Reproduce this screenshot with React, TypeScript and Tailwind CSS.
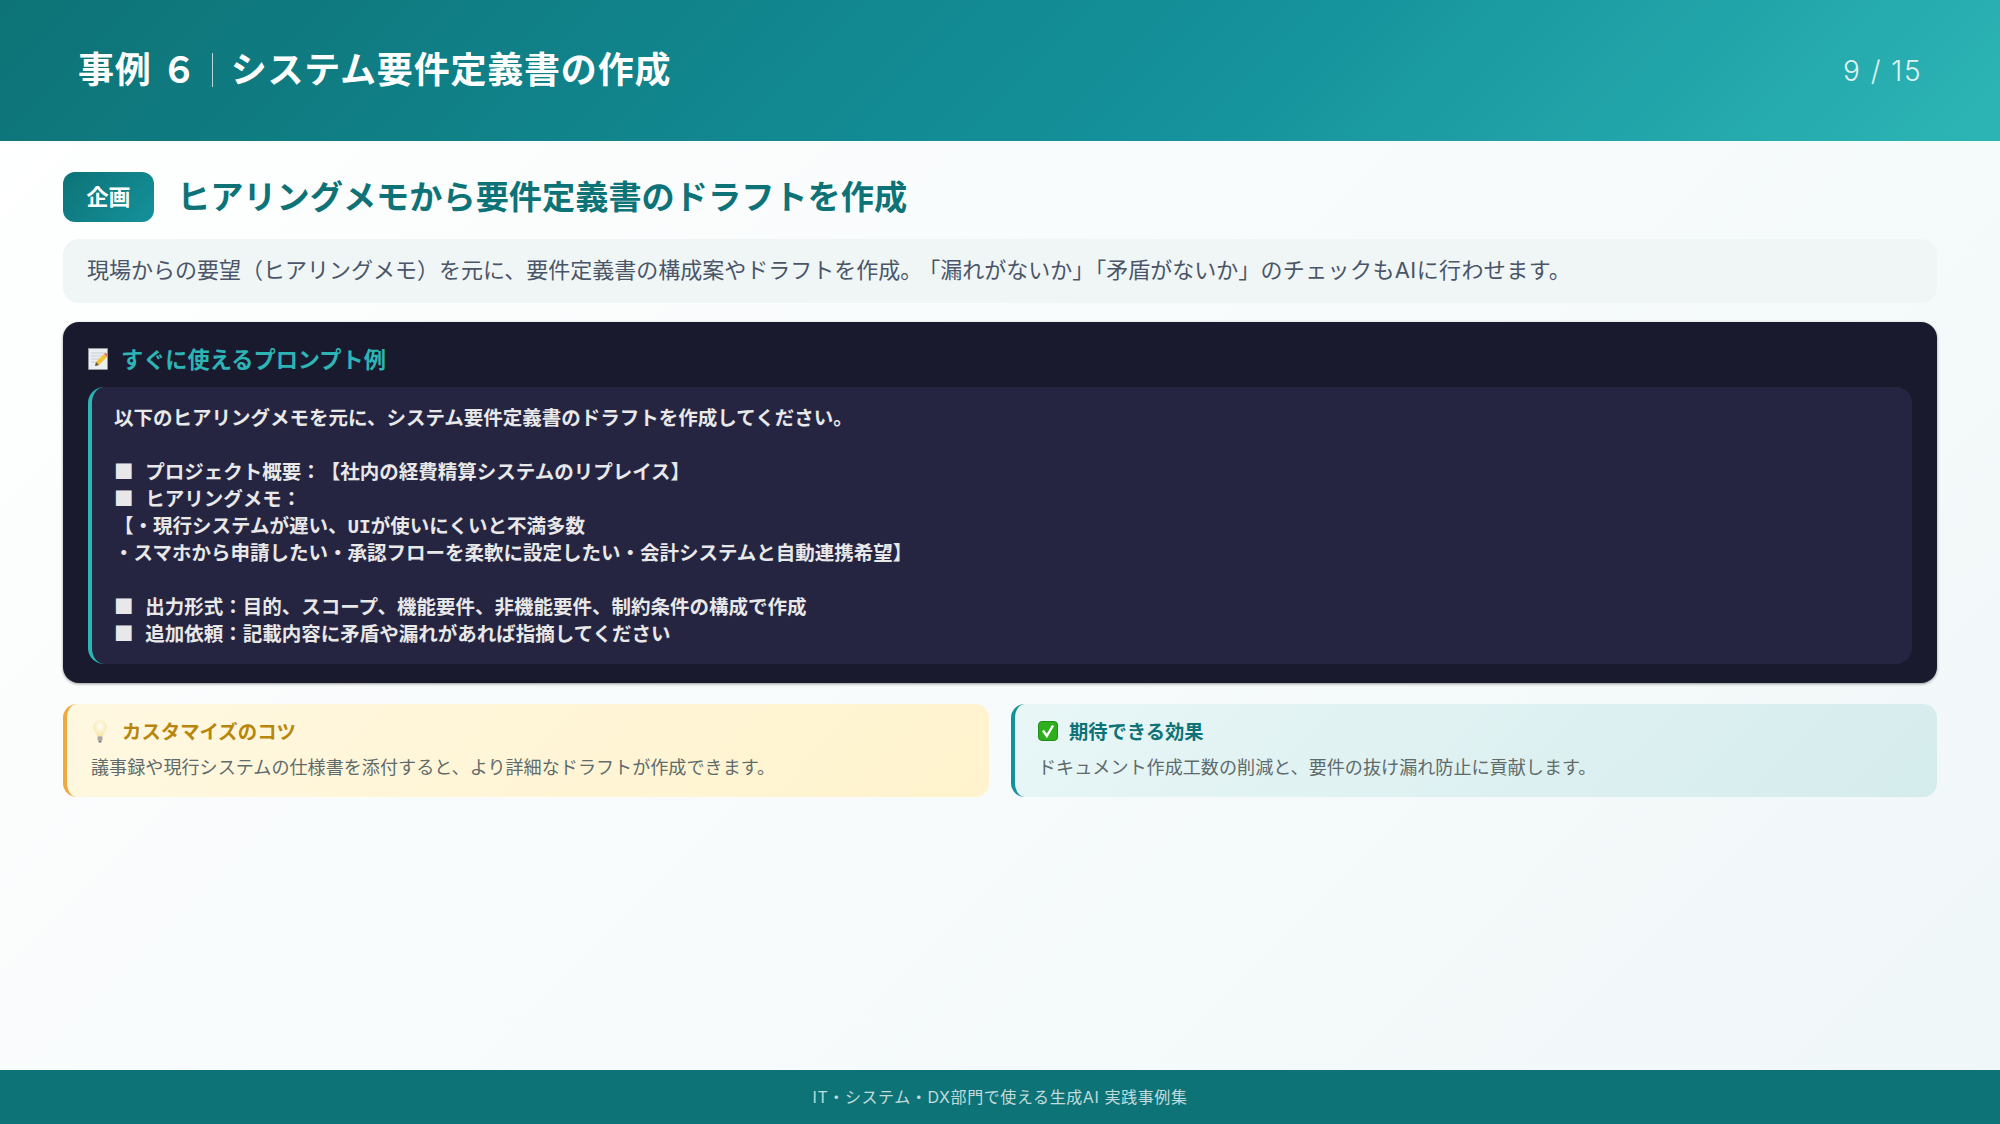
import React from 'react';

const jp = 'font-["Inter","Noto_Sans_CJK_JP",sans-serif]';

function MemoIcon() {
  return (
    <svg width="20" height="22" viewBox="0 0 20 22" className="shrink-0 -translate-y-[1px]">
      <rect x="0.5" y="0.5" width="19" height="21" fill="#eceff1" stroke="#9aa0a8" strokeWidth="0.6" />
      <path d="M3 5h14M3 8h14M3 11h10M3 14h7" stroke="#c2c7cf" strokeWidth="0.8" />
      <path d="M7 18l1-4 8-8 3 3-8 8z" fill="#f2c230" />
      <path d="M16 6l1.6-1.6 2.4 2.4L19 9z" fill="#e0707c" />
      <path d="M7 18l1-4 3 3z" fill="#5f5648" />
    </svg>
  );
}

function BulbIcon() {
  return (
    <svg width="16" height="24" viewBox="0 0 14 21" className="shrink-0 -translate-y-[2px]">
      <defs>
        <radialGradient id="bulb" cx="0.5" cy="0.38" r="0.6">
          <stop offset="0" stopColor="#fffef8" />
          <stop offset="1" stopColor="#f9e6a6" />
        </radialGradient>
      </defs>
      <path d="M7 1a6 6 0 0 0-6 6c0 3 2.500 4.500 3.500 8h5c1-3.500 3.500-5 3.500-8a6 6 0 0 0-6-6z" fill="url(#bulb)" />
      <rect x="4.800" y="15" width="4.400" height="4" rx="1" fill="#a9a9a2" />
      <rect x="5.800" y="19" width="2.400" height="1.600" fill="#77766f" />
    </svg>
  );
}

function CheckIcon() {
  return (
    <svg width="20" height="20" viewBox="0 0 20 20" className="shrink-0 -translate-y-[1px]">
      <rect x="0.500" y="0.500" width="19" height="19" rx="3.500" fill="#2fae1e" stroke="#1f8f14" />
      <path d="M5 9.500l3.800 5.500L15 4.500" fill="none" stroke="#ffffff" strokeWidth="2.400" />
    </svg>
  );
}

function Sq() {
  return <span className='font-["Noto_Sans_CJK_JP",sans-serif] leading-none'>■</span>;
}

export default function App() {
  return (
    <div className={`flex h-[1124px] w-[2000px] flex-col overflow-hidden bg-[linear-gradient(135deg,#ffffff_0%,#f0f7f8_100%)] ${jp}`}>
      <header className="flex h-[141px] shrink-0 items-center justify-between bg-[linear-gradient(135deg,#0d7377_0%,#14919b_60%,#2db5b5_100%)] pl-[78px] pr-[78px]">
        <h1 className="mb-[1px] flex items-center text-[36px] font-bold leading-[44px] tracking-[0.8px] text-white">
          <span>事例 ６</span>
          <span className="ml-[14px] mr-[18px] h-[34px] w-px bg-white/70" />
          <span>システム要件定義書の作成</span>
        </h1>
        <div className="text-[28px] font-light tracking-[1.500px] text-white/85">9 / 15</div>
      </header>

      <main className="flex flex-1 flex-col px-[63px] pt-[31px]">
        <div className="flex items-center gap-[23px]">
          <span className="flex h-[50px] w-[91px] items-center justify-center rounded-[12px] bg-[linear-gradient(135deg,#0d7377,#14919b)] text-[22px] font-bold text-white">企画</span>
          <h2 className="translate-y-[1px] text-[33.200px] font-bold text-[#0d7377]">ヒアリングメモから要件定義書のドラフトを作成</h2>
        </div>

        <p className="mt-[17px] flex h-[64px] items-center rounded-[16px] bg-[#f0f6f6] px-[24px] pb-[2px] text-[22px] text-[#4a5568]">
          <span>
            現場からの要望（ヒアリングメモ）を元に、要件定義書の構成案やドラフトを作成。
            <span className="ml-[7px]">「漏れがないか」</span>
            <span className="ml-[1px]">「矛盾がないか」</span>
            <span className="tracking-[0.4px]">のチェックもAIに行わせます。</span>
          </span>
        </p>

        <section className="mt-[19px] flex h-[361px] flex-col rounded-[16px] bg-[#1a1a2e] px-[25px] pt-[16px] shadow-[0_1px_3px_rgba(0,0,0,0.4)]">
          <div className="flex h-[44px] items-center gap-[13px]">
            <MemoIcon />
            <h3 className="text-[22.200px] font-bold text-[#2db5b5]">すぐに使えるプロンプト例</h3>
          </div>
          <pre className='mt-[5px] h-[277px] rounded-[16px] border-l-4 border-[#2db5b5] bg-[#252542] px-[22px] py-[20px] font-["Liberation_Mono","Noto_Sans_CJK_JP",monospace] text-[19.500px] font-bold leading-[27px] whitespace-pre-wrap text-[#e8e8e8] [text-spacing-trim:space-all]'>
            以下のヒアリングメモを元に、システム要件定義書のドラフトを作成してください。{'\n\n'}
            <Sq /> プロジェクト概要：【社内の経費精算システムのリプレイス】{'\n'}
            <Sq /> ヒアリングメモ：{'\n'}
            【・現行システムが遅い、UIが使いにくいと不満多数{'\n'}
            ・スマホから申請したい・承認フローを柔軟に設定したい・会計システムと自動連携希望】{'\n\n'}
            <Sq /> 出力形式：目的、スコープ、機能要件、非機能要件、制約条件の構成で作成{'\n'}
            <Sq /> 追加依頼：記載内容に矛盾や漏れがあれば指摘してください
          </pre>
        </section>

        <div className="mt-[21px] grid grid-cols-2 gap-[22px]">
          <div className="h-[93px] rounded-[14px] border-l-4 border-[#f0a840] bg-[linear-gradient(135deg,#fff8e1,#fff3cd)] pl-[24px] pr-[20px] pt-[13px]">
            <div className="flex h-[30px] translate-y-[1px] items-center gap-[14px] pl-[1px]">
              <BulbIcon />
              <h4 className="text-[19.400px] font-bold text-[#b8860b]">カスタマイズのコツ</h4>
            </div>
            <p className="mt-[7px] text-[18.100px] leading-[27px] text-[#5f6b6b]">議事録や現行システムの仕様書を添付すると、より詳細なドラフトが作成できます。</p>
          </div>
          <div className="h-[93px] rounded-[14px] border-l-4 border-[#14919b] bg-[linear-gradient(135deg,#e8f6f6,#d5eced)] pl-[23px] pr-[20px] pt-[13px]">
            <div className="flex h-[30px] items-center gap-[11px]">
              <CheckIcon />
              <h4 className="text-[19.300px] font-bold text-[#0d7377]">期待できる効果</h4>
            </div>
            <p className="mt-[7px] text-[18.100px] leading-[27px] text-[#5f6b6b]">ドキュメント作成工数の削減と、要件の抜け漏れ防止に貢献します。</p>
          </div>
        </div>
      </main>

      <footer className="flex h-[54px] shrink-0 items-center justify-center bg-[#0d7377] text-[16px] tracking-[0.6px] text-white/75">
        IT・システム・DX部門で使える生成AI 実践事例集
      </footer>
    </div>
  );
}
